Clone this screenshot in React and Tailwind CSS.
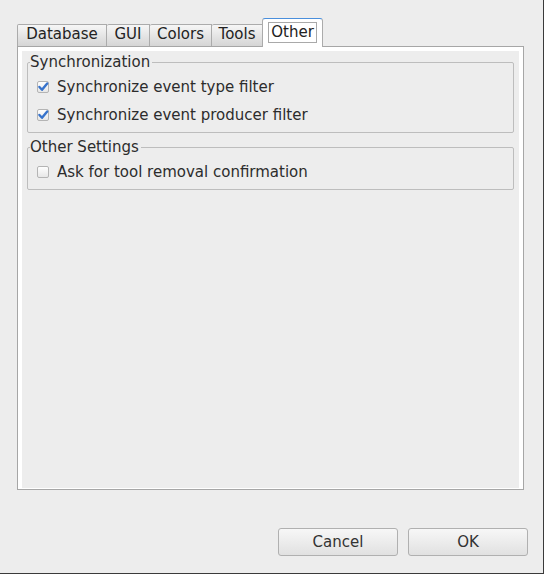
import React from 'react';

const font = { fontFamily: '"DejaVu Sans", "Liberation Sans", sans-serif' };

function CheckBox({ checked }) {
  return (
    <svg width="12" height="12" viewBox="0 0 12 12" className="shrink-0">
      <defs>
        <linearGradient id={checked ? 'cbg1' : 'cbg0'} x1="0" y1="0" x2="0" y2="1">
          <stop offset="0" stopColor="#ffffff" />
          <stop offset="1" stopColor="#e6e6e6" />
        </linearGradient>
      </defs>
      <rect x="0.5" y="0.5" width="11" height="11" rx="1.5" fill={`url(#${checked ? 'cbg1' : 'cbg0'})`} stroke="#b4b4b4" />
      {checked && (
        <path d="M2.4 6 L5 8.8 L10.2 2.4" fill="none" stroke="#3773cc" strokeWidth="2.4" strokeLinecap="round" strokeLinejoin="round" />
      )}
    </svg>
  );
}

function Row({ checked, label }) {
  return (
    <div className="h-[28px] flex items-center pl-[9px] gap-[8px]">
      <CheckBox checked={checked} />
      <span className="text-[#2c2c2c]">{label}</span>
    </div>
  );
}

function Group({ title, children, className }) {
  return (
    <fieldset className={`border border-[#bdbdbd] rounded-[2px] pt-[2px] pb-[3px] ${className}`}>
      <legend className="ml-[2px] pr-[2px] leading-[17px] text-[#2c2c2c]">{title}</legend>
      {children}
    </fieldset>
  );
}

const tabs = [
  { name: 'Database', w: 'w-[90px] border-l' },
  { name: 'GUI', w: 'w-[43px]' },
  { name: 'Colors', w: 'w-[62px]' },
  { name: 'Tools', w: 'w-[51px]' },
];

export default function App() {
  return (
    <div className="w-[544px] h-[574px] bg-[#ededed] border-r border-b border-[#3a3a3a] flex flex-col pl-[17px] pr-[19px] pt-[18px] text-[15px]" style={font}>
      <div className="h-[28px] flex items-end">
        {tabs.map((t) => (
          <div
            key={t.name}
            className={`${t.w} h-[22px] border-t border-r border-[#ababab] bg-gradient-to-b from-[#f6f6f6] to-[#d5d5d5] flex items-center justify-center text-[#222] rounded-tl-[2px] pb-[2px]`}
          >
            {t.name}
          </div>
        ))}
        <div className="relative z-10 -ml-px -mb-px w-[61px] h-[29px] bg-white border-x border-[#ababab] border-t border-t-[#4a8fdc] rounded-t-[3px] flex items-start justify-center pt-[3px]">
          <span className="border border-[#a9a9a9] px-[2px] leading-[19px] text-[#222]">Other</span>
        </div>
      </div>

      <div className="h-[444px] border border-[#a6a6a6] bg-white pt-[4px] px-[4px] pb-px">
        <div className="h-full bg-[#ededed] px-[5px] pt-[3px]">
          <Group title="Synchronization">
            <Row checked label="Synchronize event type filter" />
            <Row checked label="Synchronize event producer filter" />
          </Group>
          <Group title="Other Settings" className="mt-[6px]">
            <Row checked={false} label="Ask for tool removal confirmation" />
          </Group>
        </div>
      </div>

      <div className="mt-[38px] flex justify-end gap-[10px] mr-[-4px]">
        <button className="w-[120px] h-[28px] border border-[#b0b0b0] rounded-[3px] bg-gradient-to-b from-[#f7f7f7] to-[#e1e1e1] text-[#333]">
          Cancel
        </button>
        <button className="w-[120px] h-[28px] border border-[#b0b0b0] rounded-[3px] bg-gradient-to-b from-[#f7f7f7] to-[#e1e1e1] text-[#333]">
          OK
        </button>
      </div>
    </div>
  );
}
